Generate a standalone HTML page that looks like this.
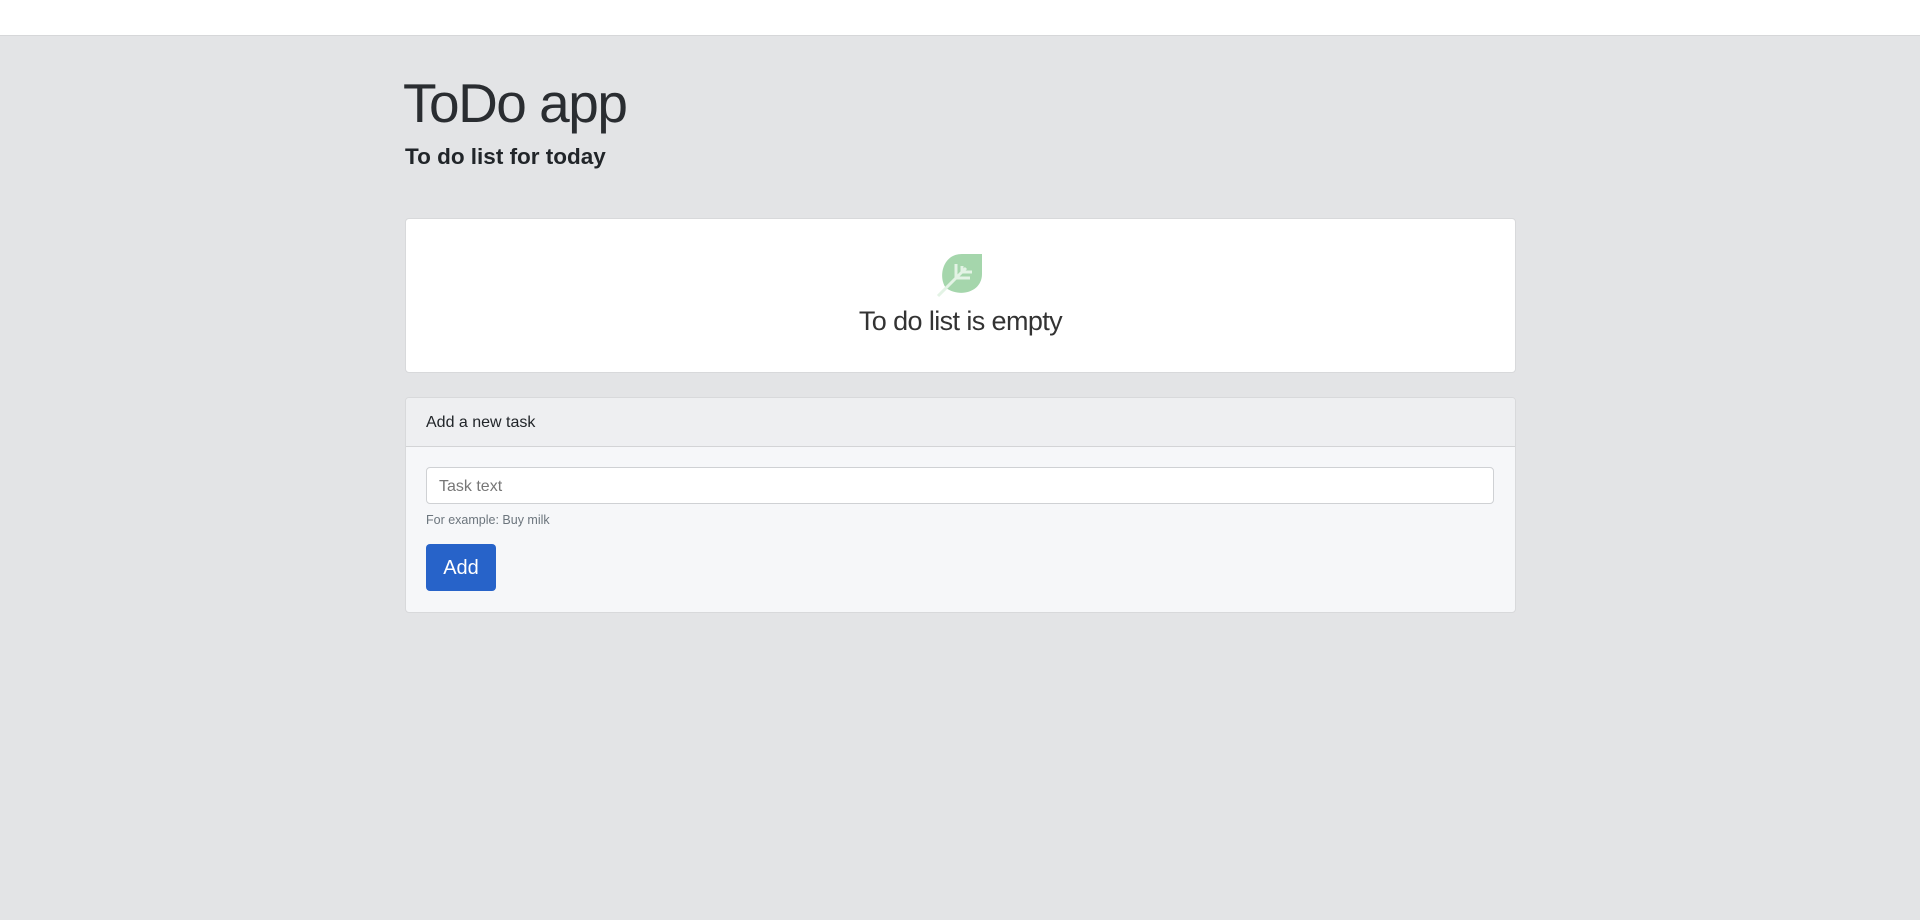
<!DOCTYPE html>
<html><head><meta charset="utf-8"><style>
body{margin:0;width:1920px;height:920px;background:#e3e4e6;font-family:"Liberation Sans",sans-serif;color:#212529;overflow:hidden}
.top{height:35px;background:#fff;border-bottom:1px solid #d6d7d9}
.wrap{position:absolute;left:405px;width:1109px}
h1{position:absolute;left:403px;top:68px;margin:0;font-size:55px;font-weight:300;letter-spacing:-1.5px;line-height:70px;color:#2a2d31}
h2{position:absolute;left:405px;top:142px;margin:0;font-size:22.5px;font-weight:bold;line-height:30px}
.c1{top:218px;height:153px;background:#fff;border:1px solid #d8d9db;border-radius:4px}
.c1 svg{position:absolute;left:530px;top:29px}
.c1 .t{position:absolute;left:0;right:0;top:87px;text-align:center;font-size:27px;font-weight:300;color:#333;letter-spacing:-0.6px}
.c2{top:397px;height:214px;background:#f6f7f9;border:1px solid #d8d9db;border-radius:4px;overflow:hidden}
.hd{height:48px;background:#eeeff1;border-bottom:1px solid #d3d4d6;font-size:16px;line-height:50px;padding-left:20px}
.inp{position:absolute;left:20px;top:69px;height:37px;background:#fff;border:1px solid #cfd1d4;border-radius:4px;font-size:16px;color:#777;line-height:37px;padding-left:12px;box-sizing:border-box;width:1068px}
.help{position:absolute;left:20px;top:115px;font-size:12.5px;color:#6c757d}
.btn{position:absolute;left:20px;top:146px;width:70px;height:47px;background:#2763c9;border-radius:4px;color:#fff;font-size:20px;line-height:49px;text-align:center}
</style></head><body>
<div class="top"></div>
<h1>ToDo app</h1>
<h2>To do list for today</h2>
<div class="wrap c1">
<svg width="50" height="50" viewBox="0 0 50 50"><path d="M10 40 C2 30 6 6 26 6 L46 6 L46 26 C46 44 24 50 10 40Z" fill="#a5d6ac"/><path d="M2 48 L30 20 M20 16 V30 M26 18 V24 H36 M20 30 H34" stroke="#e3f3e5" stroke-width="3" fill="none"/></svg>
<div class="t">To do list is empty</div>
</div>
<div class="wrap c2">
<div class="hd">Add a new task</div>
<div class="inp">Task text</div>
<div class="help">For example: Buy milk</div>
<div class="btn">Add</div>
</div>
</body></html>
